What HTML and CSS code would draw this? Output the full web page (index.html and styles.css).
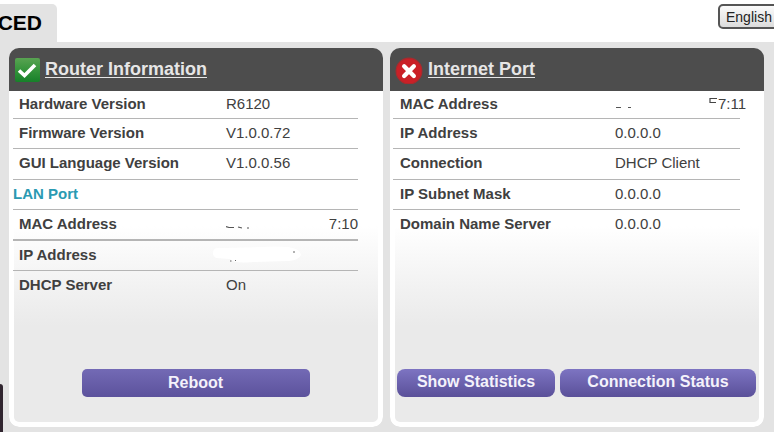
FILE: index.html
```html
<!DOCTYPE html>
<html lang="en">
<head>
<meta charset="utf-8">
<title>Router</title>
<link rel="stylesheet" href="styles.css">
</head>
<body>
<header class="top">
  <a class="tab" href="#advanced">CED</a>
  <select class="language" aria-label="Language"><option>English</option></select>
</header>
<main class="content">
  <section class="panel">
    <h2 class="panel-head">
      <svg class="icon" viewBox="0 0 26 26" aria-hidden="true">
        <defs><linearGradient id="ok" x1="0" y1="0" x2="0" y2="1"><stop offset="0" stop-color="#59a352"/><stop offset=".5" stop-color="#35943b"/><stop offset="1" stop-color="#178029"/></linearGradient></defs>
        <rect x="1" y="1" width="25" height="24" rx="2" fill="url(#ok)"/>
        <path d="M5 13.5 L10.5 18.5 L21 8" fill="none" stroke="#fff" stroke-width="3.6"/>
      </svg>
      <a href="#router">Router Information</a>
    </h2>
    <div class="panel-body">
      <table class="facts">
        <tr><th>Hardware Version</th><td>R6120</td></tr>
        <tr><th>Firmware Version</th><td>V1.0.0.72</td></tr>
        <tr><th>GUI Language Version</th><td>V1.0.0.56</td></tr>
        <tr><th class="group" colspan="2">LAN Port</th></tr>
        <tr class="strong"><th>MAC Address</th><td><div class="masked">
          <svg class="marks" viewBox="0 0 40 16" aria-hidden="true"><path d="M0 11.5 L3 12.5 H8 M12 12 L16 13 M21 13 H23" fill="none" stroke="#555" stroke-width="1.2"/></svg>
          <span>7:10</span></div></td></tr>
        <tr><th>IP Address</th><td><svg class="smudge" viewBox="0 0 90 18" aria-hidden="true"><path d="M0 6 Q1 1 9 2 L48 1 Q62 0 75 1 Q88 3 88 9 Q86 14 76 15 L40 16 Q20 18 17 13 L3 12 Q-1 9 0 6Z" fill="#fff"/><path d="M17 15 H18.5 M22 14.5 H23 M80 6 H82" stroke="#666"/></svg></td></tr>
        <tr><th>DHCP Server</th><td>On</td></tr>
      </table>
      <div class="actions single"><button type="button">Reboot</button></div>
    </div>
  </section>
  <section class="panel wan">
    <h2 class="panel-head">
      <svg class="icon" viewBox="0 0 26 26" aria-hidden="true">
        <circle cx="13" cy="14" r="12" fill="#ca2027" stroke="#a92a2d"/>
        <path d="M8.5 9.5 L17.5 18.5 M17.5 9.5 L8.5 18.5" stroke="#fff" stroke-width="4" stroke-linecap="round"/>
      </svg>
      <a href="#internet">Internet Port</a>
    </h2>
    <div class="panel-body">
      <table class="facts">
        <tr><th>MAC Address</th><td><div class="masked">
          <svg class="marks" viewBox="0 0 40 16" aria-hidden="true"><path d="M1 12.5 H6 M13 12.5 H16" fill="none" stroke="#555" stroke-width="1"/></svg>
          <span class="tail"><svg class="stub" viewBox="0 0 9 16" aria-hidden="true"><path d="M1 8 V3.5 H8 M1 7.5 H7" fill="none" stroke="#444" stroke-width="1.2"/></svg>7:11</span></div></td></tr>
        <tr><th>IP Address</th><td>0.0.0.0</td></tr>
        <tr><th>Connection</th><td>DHCP Client</td></tr>
        <tr><th>IP Subnet Mask</th><td>0.0.0.0</td></tr>
        <tr><th>Domain Name Server</th><td>0.0.0.0</td></tr>
      </table>
      <div class="actions"><button type="button">Show Statistics</button><button type="button">Connection Status</button></div>
    </div>
  </section>
</main>
<div class="edge" aria-hidden="true"></div>
</body>
</html>
```
FILE: styles.css
```css
* { box-sizing: border-box; }

body {
  margin: 0;
  min-height: 100vh;
  overflow: hidden;
  display: flex;
  flex-direction: column;
  background: #fff;
  color: #404040;
  font-family: "Liberation Sans", Arial, sans-serif;
  font-size: 15px;
}

.top {
  display: flex;
  justify-content: space-between;
  padding-top: 4px;
}

.tab {
  display: flex;
  align-items: center;
  justify-content: flex-end;
  width: 57px;
  height: 38px;
  padding-right: 15px;
  background: #e3e3e3;
  border-radius: 0 5px 0 0;
  color: #000;
  font-size: 21px;
  font-weight: bold;
  text-decoration: none;
}

.language {
  appearance: none;
  width: 84px;
  height: 25px;
  margin-right: -28px;
  padding: 0 6px;
  border: 2px solid #555;
  border-radius: 5px;
  background: linear-gradient(#fafafa, #dcdcdc);
  color: #222;
  font: 14px "Liberation Sans", Arial, sans-serif;
}

.content {
  flex: 1;
  display: grid;
  grid-template-columns: 1fr 1fr;
  gap: 7px;
  padding: 6px 10px 5px 9px;
  background: #e3e3e3;
}

.panel {
  display: flex;
  flex-direction: column;
  border-radius: 10px;
  overflow: hidden;
}

.panel-head {
  display: flex;
  align-items: center;
  gap: 5px;
  height: 43px;
  margin: 0;
  padding: 0 5px;
  background: #4d4d4d;
  font-size: 18px;
}

.panel-head a {
  color: #e6e6e6;
  text-underline-offset: 2px;
}

.icon { width: 26px; height: 26px; }

.wan .icon { width: 28px; height: 28px; }

.panel-body {
  flex: 1;
  display: flex;
  flex-direction: column;
  justify-content: space-between;
  border: solid #fff;
  border-width: 0 5px 5px;
  border-radius: 0 0 10px 10px;
  background: linear-gradient(#fff 135px, #f2f2f2 195px, #eaeaea 235px);
}

.facts {
  table-layout: fixed;
  border-collapse: separate;
  border-spacing: 0;
  margin: 0 20px 0 -1px;
}

.wan .facts { margin: 0 19px 0 -2px; }

.facts tr { height: 30px; }
.facts tr:nth-child(odd) { height: 31px; }
.facts tr:first-child { height: 28px; }

.facts th,
.facts td {
  padding: 0 0 2px;
  border-bottom: 1px solid #b5b5b5;
  text-align: left;
  line-height: 18px;
}

.facts th { width: 213px; padding-left: 6px; }
.wan .facts th { width: 222px; padding-left: 7px; }
.facts tr:last-child > * { border-bottom-color: transparent; }
.facts .strong > * { border-bottom-width: 2px; }

.facts .group { padding-left: 0; color: #2a9ab2; }

.masked {
  display: flex;
  justify-content: space-between;
}

.marks { width: 40px; height: 16px; }

.tail { display: flex; margin-right: -6px; }

.stub { width: 9px; height: 16px; }

.smudge {
  display: block;
  width: 90px;
  height: 18px;
  margin-left: -13px;
}

.actions {
  display: flex;
  gap: 5px;
  padding: 0 3px 25px 2px;
}

.actions button {
  flex: 158 1 0;
  height: 28px;
  padding: 0 0 3px;
  border: 0;
  border-radius: 8px;
  background: linear-gradient(#7d74c2, #5a5099);
  color: #f4f2fb;
  font: bold 16px "Liberation Sans", Arial, sans-serif;
}

.actions button + button { flex-grow: 196; }

.actions.single { justify-content: center; }

.actions.single button {
  flex: 0 0 228px;
  padding: 0;
  border-radius: 5px;
  background: linear-gradient(#736ab5, #5c529c);
}

.edge {
  position: absolute;
  left: 0;
  bottom: 0;
  width: 3px;
  height: 48px;
  border-radius: 0 3px 0 0;
  background: #30252f;
}
```
